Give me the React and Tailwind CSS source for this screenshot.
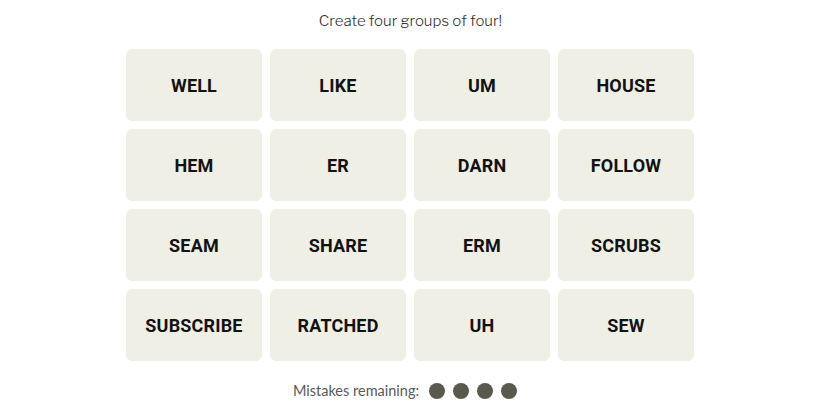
export default function App() {
  const words = [
    "WELL", "LIKE", "UM", "HOUSE",
    "HEM", "ER", "DARN", "FOLLOW",
    "SEAM", "SHARE", "ERM", "SCRUBS",
    "SUBSCRIBE", "RATCHED", "UH", "SEW",
  ];
  return (
    <div className="w-[825px] h-[413px] bg-white flex flex-col items-center">
      <p className="mt-[10px] ml-[-4px] h-[22px] leading-[22px] text-[15px] text-[#333]" style={{ fontFamily: "'Libre Franklin', 'Noto Sans', Lato, sans-serif", fontWeight: 300 }}>
        Create four groups of four!
      </p>
      <div className="mt-[17px] ml-[-5px] grid grid-cols-[repeat(4,136px)] auto-rows-[72px] gap-[8px]">
        {words.map((w) => (
          <div key={w} className="bg-[#efefe6] rounded-[6px] flex items-center justify-center text-[18px] font-bold text-[#121212] tracking-[0.01em]" style={{ fontFamily: "Roboto, 'Noto Sans', sans-serif" }}>
            {w}
          </div>
        ))}
      </div>
      <div className="mt-[21px] ml-[-15px] flex items-center h-[18px]">
        <span className="text-[14.5px] text-[#5a5a5a] mr-[10px]" style={{ fontFamily: "Lato, 'Noto Sans', sans-serif" }}>Mistakes remaining:</span>
        <div className="flex gap-[8px]">
          <span className="w-[16px] h-[16px] rounded-full bg-[#5a594e]" />
          <span className="w-[16px] h-[16px] rounded-full bg-[#5a594e]" />
          <span className="w-[16px] h-[16px] rounded-full bg-[#5a594e]" />
          <span className="w-[16px] h-[16px] rounded-full bg-[#5a594e]" />
        </div>
      </div>
    </div>
  );
}
